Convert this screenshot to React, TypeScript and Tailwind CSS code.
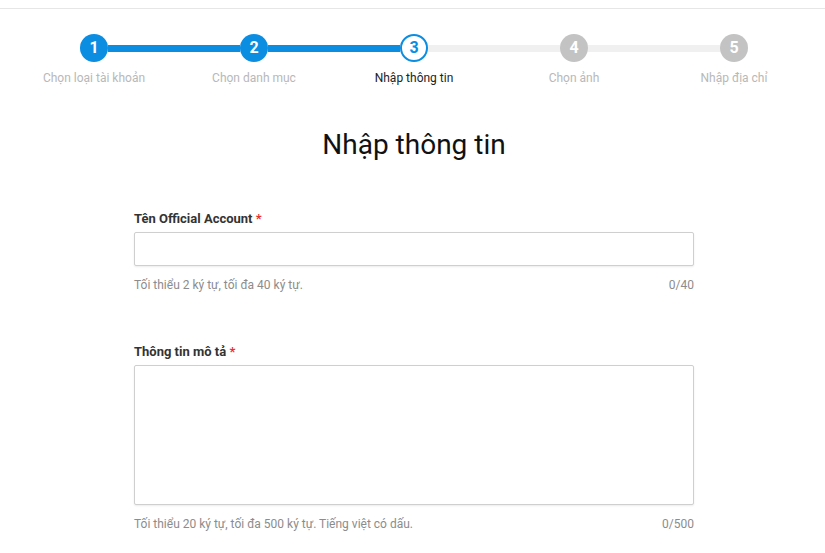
import React from 'react';

const steps = ['Chọn loại tài khoản', 'Chọn danh mục', 'Nhập thông tin', 'Chọn ảnh', 'Nhập địa chỉ'];
const current = 3;

function Circle({ n }: { n: number }) {
  if (n < current) {
    return (
      <div className="flex h-[28px] w-[28px] shrink-0 items-center justify-center rounded-full bg-[#0b8de2] text-[16px] font-bold text-white">
        {n}
      </div>
    );
  }
  if (n === current) {
    return (
      <div className="flex h-[28px] w-[28px] shrink-0 items-center justify-center rounded-full border-2 border-[#0b8de2] bg-white text-[16px] font-bold text-[#0b8de2]">
        {n}
      </div>
    );
  }
  return (
    <div className="flex h-[28px] w-[28px] shrink-0 items-center justify-center rounded-full bg-[#c3c3c3] text-[16px] font-bold text-white">
      {n}
    </div>
  );
}

function Field({
  label,
  hint,
  count,
  multiline,
}: {
  label: string;
  hint: string;
  count: string;
  multiline?: boolean;
}) {
  return (
    <div className="flex flex-col">
      <label className="text-[13px] leading-[16px] font-bold text-[#333]">
        {label} <span className="text-[#e5312f]">*</span>
      </label>
      {multiline ? (
        <textarea className="mt-[5px] h-[140px] w-full resize-none rounded-[2px] border border-[#cfcfcf] bg-white shadow-[0_1px_2px_rgba(0,0,0,0.08)] outline-none" />
      ) : (
        <input className="mt-[5px] h-[34px] w-full rounded-[2px] border border-[#cfcfcf] bg-white shadow-[0_1px_2px_rgba(0,0,0,0.08)] outline-none" />
      )}
      <div className="mt-[11px] flex justify-between text-[12px] leading-[16px] text-[#8c8c8c]">
        <span>{hint}</span>
        <span>{count}</span>
      </div>
    </div>
  );
}

export default function App() {
  return (
    <div className="min-h-[553px] bg-white font-['Roboto',_'Liberation_Sans',_sans-serif]">
      <div className="h-[8px] border-b border-[#e6e6e6] box-content" />
      <div className="ml-[14px] w-[800px]">
        <div className="mt-[25px] flex items-center px-[66px]">
          {steps.map((_, i) => (
            <React.Fragment key={i}>
              <Circle n={i + 1} />
              {i < steps.length - 1 && (
                <div className={i + 1 < current ? 'h-[7px] flex-1 bg-[#0b8de2]' : 'h-[7px] flex-1 bg-[#f0f0f0]'} />
              )}
            </React.Fragment>
          ))}
        </div>
        <div className="mt-[8px] grid grid-cols-5">
          {steps.map((s, i) => (
            <div
              key={s}
              className={
                i + 1 === current
                  ? 'text-center text-[12px] leading-[16px] text-[#222]'
                  : 'text-center text-[12px] leading-[16px] text-[#b8b8b8]'
              }
            >
              {s}
            </div>
          ))}
        </div>
        <h1 className="mt-[42px] text-center text-[28px] leading-[34px] font-normal text-[#111]">Nhập thông tin</h1>
        <div className="mx-auto mt-[49px] flex w-[560px] flex-col gap-[51px]">
          <Field label="Tên Official Account" hint="Tối thiểu 2 ký tự, tối đa 40 ký tự." count="0/40" />
          <Field
            label="Thông tin mô tả"
            hint="Tối thiểu 20 ký tự, tối đa 500 ký tự. Tiếng việt có dấu."
            count="0/500"
            multiline
          />
        </div>
      </div>
    </div>
  );
}
